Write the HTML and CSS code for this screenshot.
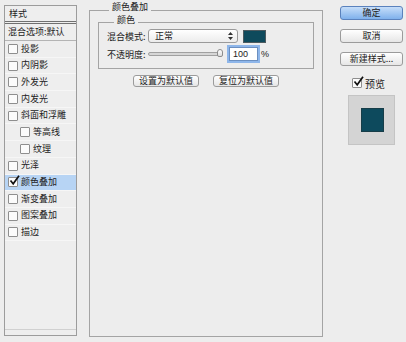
FILE: index.html
```html
<!DOCTYPE html>
<html lang="zh-CN">
<head>
  <meta charset="UTF-8" />
  <title>图层样式</title>
  <link rel="stylesheet" href="styles.css">
</head>
<body>

  <div class="dialog">
    <div class="styles-panel">
      <div class="panel-head">样式</div>
      <div class="panel-blend">混合选项:默认</div>
      <ul class="fx-list">
        <li class="fx"><span class="box"></span>投影</li>
        <li class="fx"><span class="box"></span>内阴影</li>
        <li class="fx"><span class="box"></span>外发光</li>
        <li class="fx"><span class="box"></span>内发光</li>
        <li class="fx"><span class="box"></span>斜面和浮雕</li>
        <li class="fx sub"><span class="box"></span>等高线</li>
        <li class="fx sub"><span class="box"></span>纹理</li>
        <li class="fx"><span class="box"></span>光泽</li>
        <li class="fx on"><span class="box checked"><svg width="11" height="11" viewBox="0 0 11 11"><path d="M1.5 5.5 L4.2 8.8 L10 0.8" fill="none" stroke="#111" stroke-width="1.7"/></svg></span>颜色叠加</li>
        <li class="fx"><span class="box"></span>渐变叠加</li>
        <li class="fx"><span class="box"></span>图案叠加</li>
        <li class="fx"><span class="box"></span>描边</li>
      </ul>
    </div>

    <fieldset class="group">
      <legend>颜色叠加</legend>
      <fieldset class="group inner">
        <legend>颜色</legend>
        <div class="field">
          <span class="label">混合模式:</span>
          <div class="select">正常
            <svg class="arrows" width="5" height="8" viewBox="0 0 5 8"><path d="M0 3 L2.5 0 L5 3 Z M0 5 L2.5 8 L5 5 Z" fill="#333"/></svg>
          </div>
          <span class="swatch"></span>
        </div>
        <div class="field">
          <span class="label">不透明度:</span>
          <div class="slider"><span class="thumb"></span></div>
          <span class="num">100</span><span class="unit">%</span>
        </div>
      </fieldset>
      <div class="defaults">
        <button class="btn small">设置为默认值</button>
        <button class="btn small">复位为默认值</button>
      </div>
    </fieldset>

    <div class="actions">
      <button class="btn primary">确定</button>
      <button class="btn">取消</button>
      <button class="btn">新建样式...</button>
      <div class="preview-check"><span class="box checked"><svg width="11" height="11" viewBox="0 0 11 11"><path d="M1.5 5.5 L4.2 8.8 L10 0.8" fill="none" stroke="#111" stroke-width="1.7"/></svg></span>预览</div>
      <div class="preview"><span class="preview-swatch"></span></div>
    </div>
  </div>

</body>
</html>
```

FILE: styles.css
```css
html, body {
  margin: 0;
  padding: 0;
  background: #ededed;
  font-family: 'Noto Sans CJK SC', 'Liberation Sans', sans-serif;
  font-size: 9px;
  color: #222;
}

.dialog {
  display: flex;
  align-items: flex-start;
  width: 406px;
  height: 342px;
}

/* left list */
.styles-panel {
  margin: 5px 0 0 4px;
  width: 73px;
  height: 331px;
  box-sizing: border-box;
  border: 1px solid #9c9c9c;
  background: #eeeeee;
  display: flex;
  flex-direction: column;
}

.panel-head {
  height: 15px;
  line-height: 15px;
  padding-left: 4px;
  border-bottom: 3px double #707070;
}

.panel-blend {
  height: 16px;
  line-height: 16px;
  padding-left: 3px;
  border-bottom: 1px solid #b4b4b4;
}

.fx-list {
  list-style: none;
  margin: 0;
  padding: 0;
  flex: 1;
  border-bottom: 1px solid #d0d0d0;
  margin-bottom: 5px;
}

.fx {
  height: 16.7px;
  line-height: 16.7px;
  display: flex;
  align-items: center;
  padding-left: 3px;
  box-sizing: border-box;
  border-bottom: 1px solid #f6f6f6;
}

.fx.sub {
  padding-left: 15px;
}

.fx.on {
  background: #b7d4f4;
}

.box {
  position: relative;
  width: 8px;
  height: 8px;
  margin-right: 3px;
  border: 1px solid #8e8e8e;
  border-radius: 1px;
  background: #fbfbfb;
  flex-shrink: 0;
}

.box svg {
  position: absolute;
  left: 0;
  top: -3px;
}

/* middle group */
fieldset.group {
  margin: 2px 0 0 12px;
  padding: 0 8px;
  width: 234px;
  height: 335px;
  box-sizing: border-box;
  min-width: 0;
  border: 1px solid #a4a4a4;
}

fieldset.group legend {
  padding: 0 3px 6px;
  margin-left: 11px;
  line-height: 10px;
}

fieldset.group.inner {
  margin: -3px 0 0 0;
  width: auto;
  height: auto;
  padding: 0 0 7px 8px;
}

fieldset.group.inner legend {
  margin-left: 7px;
  padding-bottom: 4px;
}

.field {
  display: flex;
  align-items: center;
  height: 14px;
}

.field + .field {
  margin-top: 4px;
}

.label {
  width: 41px;
}

.select {
  width: 90px;
  height: 14px;
  box-sizing: border-box;
  border: 1px solid #9a9a9a;
  border-radius: 3px;
  background: linear-gradient(#ffffff, #ececec);
  padding-left: 6px;
  line-height: 12px;
  display: flex;
  align-items: center;
  justify-content: space-between;
  padding-right: 4px;
}

.swatch {
  width: 23px;
  height: 13px;
  margin-left: 5px;
  box-sizing: border-box;
  border: 1px solid #4d5a5f;
  background: #0e4a5c;
}

.slider {
  position: relative;
  width: 77px;
  height: 14px;
  margin-right: 4px;
}

.slider::before {
  content: '';
  position: absolute;
  left: 0;
  right: 4px;
  top: 5px;
  height: 2px;
  border: 1px solid #a0a0a0;
  border-radius: 2px;
  background: #d6d6d6;
}

.thumb {
  position: absolute;
  right: 2px;
  top: 2px;
  width: 6px;
  height: 8px;
  box-sizing: border-box;
  border: 1px solid #8c8c8c;
  border-radius: 3px 3px 2px 2px;
  background: linear-gradient(#ffffff, #dcdcdc);
}

.num {
  width: 29px;
  height: 14px;
  box-sizing: border-box;
  border: 1px solid #6b8fc0;
  box-shadow: 0 0 0 2px #8eb6ea;
  background: #fff;
  font-family: 'Liberation Sans', sans-serif;
  font-size: 9px;
  line-height: 12px;
  padding-left: 3px;
}

.unit {
  margin-left: 3px;
  font-family: 'Liberation Sans', sans-serif;
}

.defaults {
  display: flex;
  justify-content: center;
  gap: 14px;
  margin-top: 6px;
}

/* buttons */
.btn {
  font-family: inherit;
  font-size: 9px;
  color: #222;
  height: 14px;
  padding: 0;
  line-height: 12px;
  border: 1px solid #9b9b9b;
  border-radius: 3px;
  background: linear-gradient(#ffffff, #e6e6e6);
  box-sizing: border-box;
}

.btn.small {
  width: 66px;
  height: 12px;
  line-height: 10px;
}

/* right column */
.actions {
  margin: 6px 0 0 17px;
  width: 63px;
  display: flex;
  flex-direction: column;
  gap: 9px;
}

.btn.primary {
  border-color: #5a82bd;
  background: linear-gradient(#c6def9, #7fb1ec);
}

.preview-check {
  display: flex;
  align-items: center;
  margin: 2px 0 0 12px;
  height: 12px;
  font-size: 10px;
}

.preview {
  margin: -3px 0 0 8px;
  width: 47px;
  height: 50px;
  box-sizing: border-box;
  border: 1px solid #c4c4c4;
  background: #d4d4d4;
  display: flex;
  align-items: center;
  justify-content: center;
}

.preview-swatch {
  width: 23px;
  height: 24px;
  margin-left: 2px;
  background: #0d4a5d;
  border: 1px solid #173d48;
  box-sizing: border-box;
}
```
